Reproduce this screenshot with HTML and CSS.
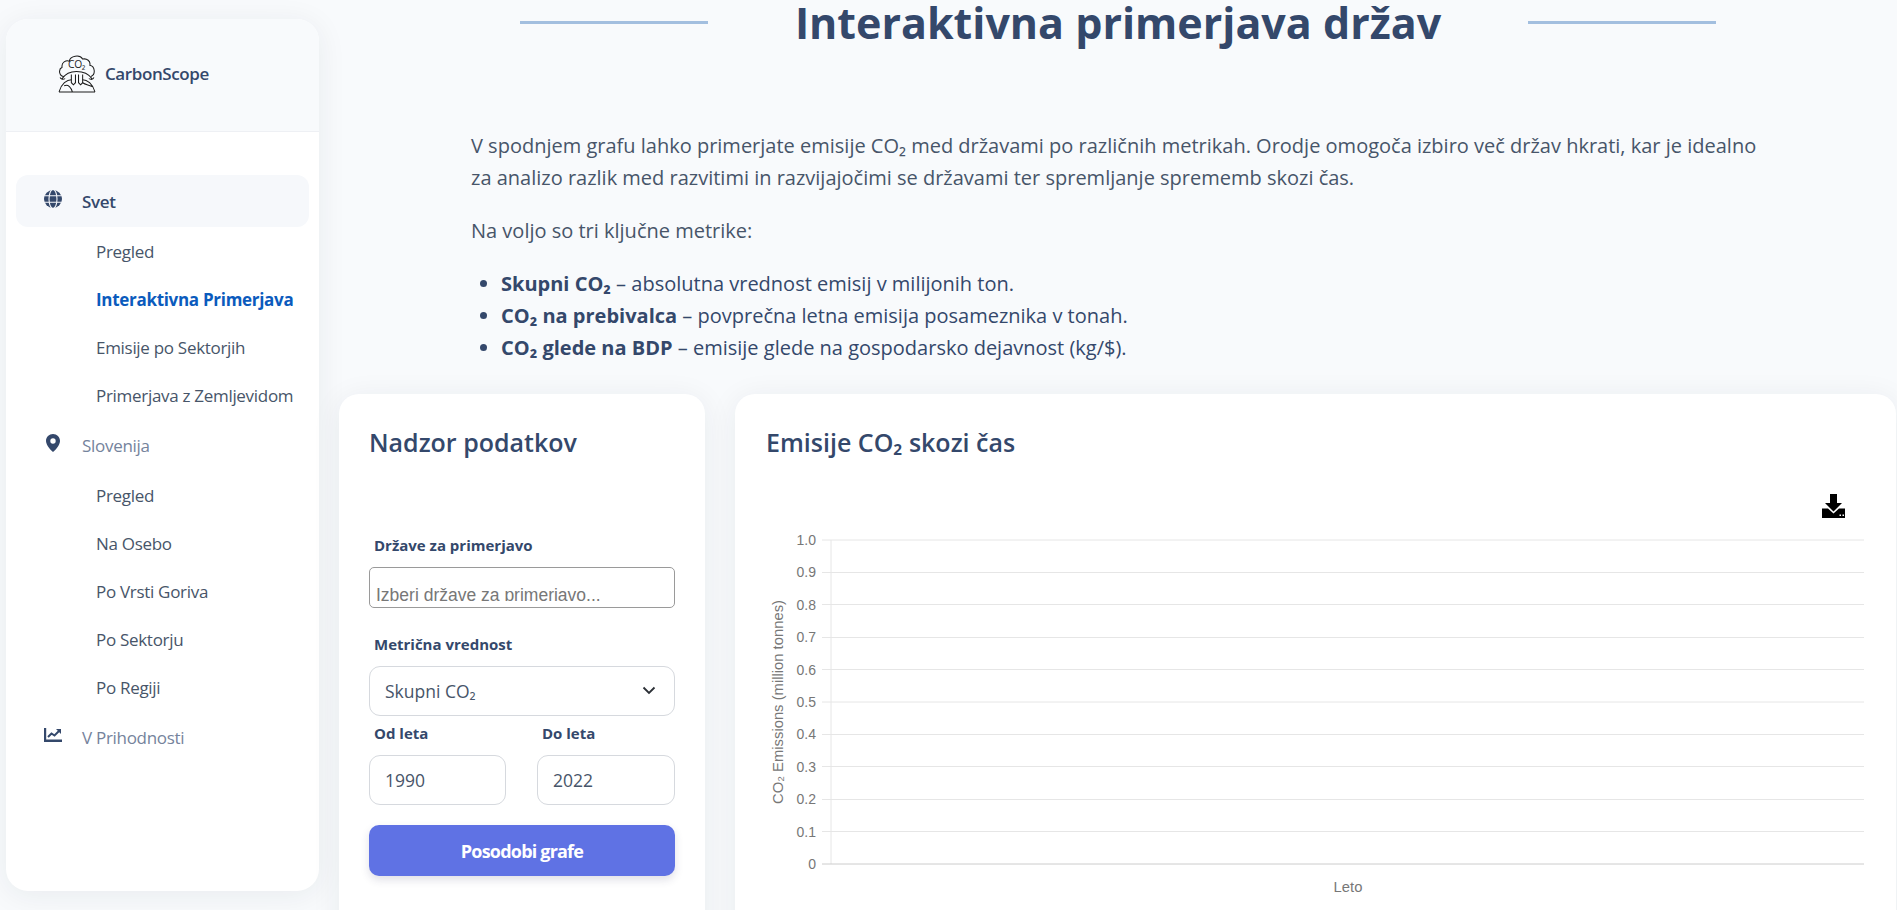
FILE: index.html

```html
<!DOCTYPE html>
<html lang="sl">
<head>
  <meta charset="UTF-8" />
  <title>CarbonScope - Interaktivna primerjava</title>
  <link rel="stylesheet" href="styles.css">
</head>
<body>
  <aside class="sidebar">
    <div class="brand">
      <svg class="brand-logo" viewBox="0 0 37 37" fill="none" stroke="#1c1c1c" stroke-width="1">
        <path d="M6 21C1 21 0 14 4 12 3 7 8 5 11 6 12 1 21-1 24 4 28 3 32 6 31 10 36 11 37 19 32 21"/>
        <path d="M4 23C8 17 13 16 18 16s11 1 15 7M2 22c1 2 3 2 5 1M35 22c-1 2-3 2-5 1"/>
        <text x="18" y="12.500" text-anchor="middle" class="logo-text">CO₂</text>
        <path d="M1 36C3 28 9 24 13 24M36 36C34 28 28 24 24 24M1 36h35M6 30c4-2 7 2 8 6M24 27c3 2 6 2 10 4"/>
        <path d="M13 19v8l2 2 2-2v-8M20 19v8l2 2 2-2v-8"/>
      </svg>
      <span>CarbonScope</span>
    </div>
    <nav class="nav">
      <a class="nav-main active">
        <svg class="nav-icon" viewBox="0 0 20 20"><circle cx="10" cy="10" r="9" fill="#34486b"/><g fill="none" stroke="#f6f8fb" stroke-width="1.1"><ellipse cx="10" cy="10" rx="4" ry="9.5"/><path d="M0 6.8h20M0 13.2h20"/></g></svg>
        <span>Svet</span>
      </a>
      <a class="nav-sub">Pregled</a>
      <a class="nav-sub current">Interaktivna Primerjava</a>
      <a class="nav-sub">Emisije po Sektorjih</a>
      <a class="nav-sub">Primerjava z Zemljevidom</a>
      <a class="nav-main">
        <svg class="nav-icon" viewBox="0 0 20 20"><path fill="#34486b" fill-rule="evenodd" d="M10 1c-3.900 0-7 3-7 6.900C3 12 8 17.500 10 19c2-1.500 7-7 7-11.100C17 4 13.900 1 10 1zm0 4.300a2.700 2.700 0 1 1 0 5.400 2.700 2.700 0 0 1 0-5.400z"/></svg>
        <span>Slovenija</span>
      </a>
      <a class="nav-sub">Pregled</a>
      <a class="nav-sub">Na Osebo</a>
      <a class="nav-sub">Po Vrsti Goriva</a>
      <a class="nav-sub">Po Sektorju</a>
      <a class="nav-sub">Po Regiji</a>
      <a class="nav-main">
        <svg class="nav-icon" viewBox="0 0 20 20"><path fill="#34486b" d="M1 3h2.200v11.600H19V17H1z"/><path fill="none" stroke="#34486b" stroke-width="2" d="M5 12l3.500-3.500 3 2L16 6"/><path fill="#34486b" d="M13 4h5v5z"/></svg>
        <span>V Prihodnosti</span>
      </a>
    </nav>
  </aside>

  <main class="main">
    <div class="title-row">
      <span class="title-line"></span>
      <h1>Interaktivna primerjava držav</h1>
      <span class="title-line"></span>
    </div>

    <section class="intro">
      <p>V spodnjem grafu lahko primerjate emisije CO₂ med državami po različnih metrikah. Orodje omogoča izbiro več držav hkrati, kar je idealno za analizo razlik med razvitimi in razvijajočimi se državami ter spremljanje sprememb skozi čas.</p>
      <p>Na voljo so tri ključne metrike:</p>
      <ul>
        <li><b>Skupni CO₂</b> – absolutna vrednost emisij v milijonih ton.</li>
        <li><b>CO₂ na prebivalca</b> – povprečna letna emisija posameznika v tonah.</li>
        <li><b>CO₂ glede na BDP</b> – emisije glede na gospodarsko dejavnost (kg/$).</li>
      </ul>
    </section>

    <div class="cards">
      <section class="card controls">
        <h2>Nadzor podatkov</h2>
        <label class="field-label first">Države za primerjavo</label>
        <div class="multi-select"><div class="multi-clip">Izberi države za primerjavo...</div></div>
        <label class="field-label metric">Metrična vrednost</label>
        <div class="box select">
          <span>Skupni CO₂</span>
          <svg class="chevron" viewBox="0 0 16 16" fill="none" stroke="#2b2f36" stroke-width="1.800"><path d="M2.500 5.500L8 11l5.500-5.500"/></svg>
        </div>
        <div class="year-row">
          <div>
            <label class="field-label">Od leta</label>
            <div class="box">1990</div>
          </div>
          <div>
            <label class="field-label">Do leta</label>
            <div class="box">2022</div>
          </div>
        </div>
        <button class="update-btn">Posodobi grafe</button>
      </section>

      <section class="card chart-card">
        <h2>Emisije CO₂ skozi čas</h2>
        <svg class="chart" width="1161" height="440" viewBox="0 0 1161 440">
          <path class="grid" d="M87 80h1042M87 112.500h1042M87 144.500h1042M87 177.500h1042M87 209.500h1042M87 242h1042M87 274.500h1042M87 306.500h1042M87 339.500h1042M87 371.500h1042M96 80v324"/>
          <path class="axis" d="M87 404h1042"/>
          <g class="tick">
            <text x="81" y="85">1.0</text>
            <text x="81" y="117">0.9</text>
            <text x="81" y="150">0.8</text>
            <text x="81" y="182">0.7</text>
            <text x="81" y="215">0.6</text>
            <text x="81" y="247">0.5</text>
            <text x="81" y="279">0.4</text>
            <text x="81" y="312">0.3</text>
            <text x="81" y="344">0.2</text>
            <text x="81" y="377">0.1</text>
            <text x="81" y="409">0</text>
          </g>
          <text class="axis-title" transform="translate(48 242) rotate(-90)" text-anchor="middle">CO₂ Emissions (million tonnes)</text>
          <text class="axis-title" x="613" y="432" text-anchor="middle">Leto</text>
          <g fill="#000">
            <path d="M1095 34h7v9h5l-8.500 8.500L1090 43h5z"/>
            <path fill-rule="evenodd" d="M1087 48.500h6l5.500 5 5.500-5h6V58h-23zm17.500 6h1.500v1.500h-1.500zm3 0h1.500v1.500h-1.500z"/>
          </g>
        </svg>
      </section>
    </div>
  </main>
</body>
</html>
```

FILE: styles.css

```css
* {
  box-sizing: border-box;
}

html, body {
  height: 100%;
}

body {
  font-family: "Open Sans", Arial, sans-serif;
  background-color: #f8fafc;
  color: #475569;
  margin: 0;
  display: flex;
  align-items: flex-start;
  overflow: hidden;
}

.sidebar {
  flex: 0 0 313px;
  height: 872px;
  margin: 19px 20px 0 6px;
  background-color: #ffffff;
  border-radius: 22px;
  box-shadow: 0 4px 30px rgba(30,40,60,0.07);
  overflow: hidden;
}

.brand {
  height: 113px;
  background-color: #f8fafc;
  border-bottom: 1px solid #eef0f4;
  display: flex;
  align-items: center;
  padding: 0 0 3px 52px;
  gap: 9px;
  font-size: 17px;
  font-weight: 600;
  letter-spacing: -0.4px;
  color: #34486b;
}

.brand-logo {
  width: 38px;
  height: 38px;
}

.logo-text {
  font-family: "Open Sans", Arial, sans-serif;
  font-size: 10px;
  font-weight: 400;
  fill: #1c1c1c;
  stroke: none;
}

.nav {
  padding: 43px 10px 0;
}

.nav-main {
  height: 52px;
  display: flex;
  align-items: center;
  border-radius: 12px;
  padding-left: 27px;
  font-size: 17px;
  letter-spacing: -0.3px;
  color: #75839c;
}

.nav-main.active {
  background-color: #f6f8fb;
  color: #34486b;
  font-weight: 600;
}

.nav-icon {
  width: 20px;
  height: 20px;
  margin-right: 19px;
  margin-top: -4px;
}

.nav-sub {
  display: flex;
  align-items: center;
  height: 48px;
  padding-left: 80px;
  font-size: 17px;
  letter-spacing: -0.3px;
  color: #475569;
}

.nav-sub.current {
  color: #0b5bbd;
  font-weight: 700;
}

.main {
  flex: 1;
  min-width: 0;
}

.title-row {
  height: 45px;
  display: flex;
  justify-content: center;
  align-items: center;
  gap: 87px;
}

.title-line {
  width: 188px;
  height: 3px;
  background-color: #a3bfdf;
}

h1 {
  margin: 0;
  font-size: 43px;
  line-height: 45px;
  font-weight: 700;
  color: #34486b;
}

.intro {
  margin: 85px 0 0 132px;
  width: 1300px;
  font-size: 20px;
  line-height: 32px;
}

.intro p {
  margin: 0 0 21px;
}

.intro ul {
  margin: 0;
  padding-left: 30px;
  color: #34486b;
}

.intro li {
  color: #34486b;
}

.intro li b {
  font-weight: 700;
}

.cards {
  display: grid;
  grid-template-columns: 366px 1161px;
  gap: 30px;
  margin-top: 30px;
}

.card {
  background-color: #ffffff;
  border-radius: 20px;
  box-shadow: 0 4px 30px rgba(30,40,60,0.07);
  height: 600px;
}

.card h2 {
  margin: 0;
  font-size: 25px;
  line-height: 32px;
  font-weight: 600;
  color: #34486b;
}

.controls {
  padding: 32px 30px;
}

.field-label {
  display: block;
  font-size: 15px;
  line-height: 20px;
  font-weight: 700;
  color: #34486b;
  padding-left: 5px;
}

.field-label.first {
  margin-top: 77px;
  margin-bottom: 12px;
}

.field-label.metric {
  margin-top: 26px;
  margin-bottom: 12px;
}

.multi-select {
  height: 41px;
  border: 1px solid #9a9a9a;
  border-radius: 5px;
  padding: 15px 6px 6px;
}

.multi-clip {
  height: 18px;
  overflow: hidden;
  font-family: "Liberation Sans", Arial, sans-serif;
  font-size: 17.5px;
  line-height: 24px;
  color: #777777;
  white-space: nowrap;
}

.box {
  height: 50px;
  border: 1px solid #d6d9de;
  border-radius: 11px;
  display: flex;
  align-items: center;
  padding: 0 15px;
  font-size: 17.5px;
  color: #475569;
}

.select {
  justify-content: space-between;
}

.chevron {
  width: 16px;
  height: 16px;
  margin-right: 2px;
  margin-top: -3px;
}

.year-row {
  display: grid;
  grid-template-columns: 137px 138px;
  gap: 31px;
  margin-top: 7px;
}

.year-row .box {
  margin-top: 12px;
}

.update-btn {
  width: 100%;
  height: 51px;
  margin-top: 20px;
  background-color: #5f72e4;
  color: #ffffff;
  border: none;
  border-radius: 10px;
  font-family: "Open Sans", Arial, sans-serif;
  font-size: 18px;
  font-weight: 700;
  letter-spacing: -0.8px;
  box-shadow: 0 4px 8px rgba(50,50,93,0.15);
}

.chart-card h2 {
  padding: 32px 0 0 31px;
}

.chart {
  display: block;
  margin-top: 2px;
}

.grid {
  fill: none;
  stroke: #e6e6e6;
  stroke-width: 1;
}

.axis {
  fill: none;
  stroke: #cccccc;
  stroke-width: 1;
}

.tick text {
  font-family: "Liberation Sans", Arial, sans-serif;
  font-size: 14px;
  fill: #777777;
  text-anchor: end;
}

.axis-title {
  font-family: "Liberation Sans", Arial, sans-serif;
  font-size: 14.8px;
  fill: #777777;
}
```
